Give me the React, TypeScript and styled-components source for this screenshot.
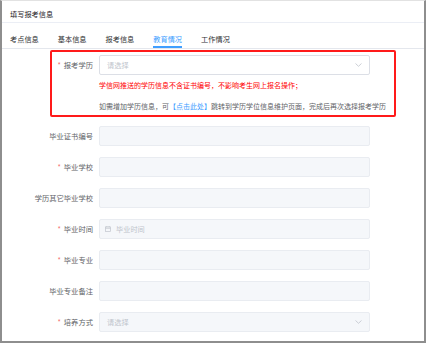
import React from 'react';
import styled, { createGlobalStyle } from 'styled-components';

const GlobalStyle = createGlobalStyle`
  html, body {
    margin: 0;
    padding: 0;
    background: #ffffff;
  }
  body {
    font-family: "Noto Sans CJK SC", "Noto Sans", sans-serif;
  }
`;

type Field = {
  label: string;
  required?: boolean;
  kind?: 'text' | 'select' | 'date';
  placeholder?: string;
};

const tabs = ['考点信息', '基本信息', '报考信息', '教育情况', '工作情况'];

const fields: Field[] = [
  { label: '毕业证书编号' },
  { label: '毕业学校', required: true },
  { label: '学历其它毕业学校' },
  { label: '毕业时间', required: true, kind: 'date', placeholder: '毕业时间' },
  { label: '毕业专业', required: true },
  { label: '毕业专业备注' },
  { label: '培养方式', required: true, kind: 'select', placeholder: '请选择' },
];

const Chevron = () => (
  <svg width="7" height="4" viewBox="0 0 7 4">
    <path d="M0.5 0.5 L3.5 3.3 L6.5 0.5" fill="none" stroke="#c0c4cc" strokeWidth="0.8" />
  </svg>
);

const CalendarIcon = () => (
  <svg width="6" height="6" viewBox="0 0 6 6">
    <rect x="0.4" y="0.9" width="5.2" height="4.7" fill="none" stroke="#c0c4cc" strokeWidth="0.7" />
    <line x1="0.4" y1="2.3" x2="5.6" y2="2.3" stroke="#c0c4cc" strokeWidth="0.7" />
    <line x1="1.8" y1="0" x2="1.8" y2="1.4" stroke="#c0c4cc" strokeWidth="0.7" />
    <line x1="4.2" y1="0" x2="4.2" y2="1.4" stroke="#c0c4cc" strokeWidth="0.7" />
  </svg>
);

const FieldLabel = ({ text, required }: { text: string; required?: boolean }) => (
  <Label>
    {required && <Star>*</Star>}
    {text}
  </Label>
);

const FieldInput = ({ field, white }: { field: Field; white?: boolean }) => (
  <Input $white={white}>
    {field.kind === 'date' && (
      <IconSlot>
        <CalendarIcon />
      </IconSlot>
    )}
    <Placeholder>{field.placeholder}</Placeholder>
    {field.kind === 'select' && <Chevron />}
  </Input>
);

const App = () => {
  return (
    <>
      <GlobalStyle />
      <Frame>
        <Title>填写报考信息</Title>
        <Tabs>
          {tabs.map((t) => (
            <Tab key={t} $active={t === '教育情况'}>
              {t}
            </Tab>
          ))}
        </Tabs>

        <Notice>
          <Row $labelWidth={41}>
            <FieldLabel text="报考学历" required />
            <FieldInput field={{ label: '报考学历', kind: 'select', placeholder: '请选择' }} white />
          </Row>
          <Warn>学信网推送的学历信息不含证书编号，不影响考生网上报名操作；</Warn>
          <Info>
            如需增加学历信息，可<Link>【点击此处】</Link>跳转到学历学位信息维护页面，完成后再次选择报考学历
          </Info>
        </Notice>

        <Form>
          {fields.map((f) => (
            <Row key={f.label} $labelWidth={91}>
              <FieldLabel text={f.label} required={f.required} />
              <FieldInput field={f} />
            </Row>
          ))}
        </Form>
      </Frame>
    </>
  );
};

export default App;

const Frame = styled.div`
  width: 426px;
  height: 343px;
  box-sizing: border-box;
  background: #ffffff;
  border-top: 1px solid #e2e2e2;
  border-left: 2px solid #8e8e8e;
  border-right: 2px solid #8e8e8e;
  border-bottom: 2px solid #8e8e8e;
  overflow: hidden;
`;

const Title = styled.div`
  height: 22px;
  box-sizing: border-box;
  padding: 8px 8px 0;
  font-size: 7.2px;
  line-height: 10px;
  color: #1f2329;
  border-bottom: 1px solid #ebeef5;
`;

const Tabs = styled.div`
  display: flex;
  gap: 19px;
  padding-left: 8px;
  border-bottom: 1px solid #e4e7ed;
`;

const Tab = styled.div<{ $active?: boolean }>`
  padding: 11px 0 2px;
  font-size: 7.2px;
  line-height: 10px;
  color: ${(p) => (p.$active ? '#409eff' : '#303133')};
  border-bottom: 2px solid ${(p) => (p.$active ? '#409eff' : 'transparent')};
`;

const Notice = styled.div`
  width: 346px;
  box-sizing: border-box;
  margin: 1px 0 0 48px;
  padding: 3px 0 4px;
  border: 2px solid #ff1a1a;
  border-radius: 2px;
`;

const Row = styled.div<{ $labelWidth: number }>`
  display: grid;
  grid-template-columns: ${(p) => p.$labelWidth}px 271px;
  column-gap: 6px;
  align-items: center;
  height: 20px;
`;

const Label = styled.div`
  text-align: right;
  font-size: 7.3px;
  color: #606266;
  white-space: nowrap;
`;

const Star = styled.span`
  color: #f56c6c;
  margin-right: 3px;
`;

const Input = styled.div<{ $white?: boolean }>`
  display: flex;
  align-items: center;
  height: 20px;
  box-sizing: border-box;
  padding: 0 7px 0 7px;
  background: ${(p) => (p.$white ? '#ffffff' : '#f5f7fa')};
  border: 1px solid ${(p) => (p.$white ? '#dcdfe6' : '#e9ecf1')};
  border-radius: 2px;
`;

const IconSlot = styled.span`
  display: flex;
  margin: 0 5px 0 -2px;
`;

const Placeholder = styled.span`
  flex: 1;
  font-size: 7.2px;
  color: #c0c4cc;
`;

const Warn = styled.div`
  margin: 5px 0 0 47px;
  font-size: 7px;
  line-height: 10px;
  color: #ff0000;
`;

const Info = styled.div`
  margin: 11px 0 0 47px;
  font-size: 7px;
  line-height: 10px;
  color: #606266;
  white-space: nowrap;
`;

const Link = styled.span`
  color: #409eff;
`;

const Form = styled.div`
  display: flex;
  flex-direction: column;
  gap: 11px;
  margin-top: 9px;
`;
